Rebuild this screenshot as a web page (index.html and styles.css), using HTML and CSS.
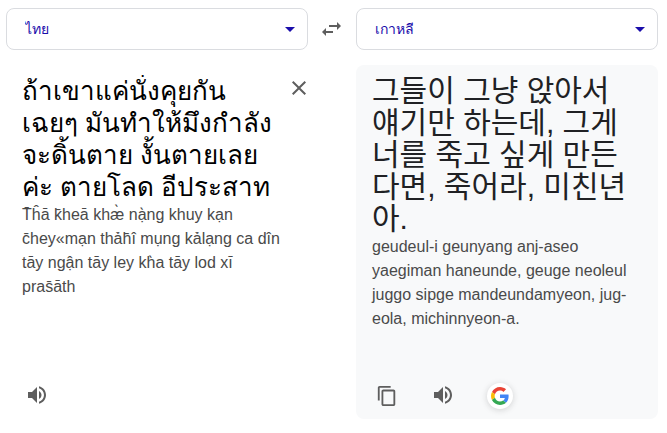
FILE: index.html
```html
<!DOCTYPE html>
<html lang="th">
<head>
<meta charset="utf-8">
<meta name="viewport" content="width=device-width, initial-scale=1">
<title>แปลภาษา</title>
<link rel="stylesheet" href="styles.css">
</head>
<body>
<main class="translator">
  <div class="picker">
    <select class="picker-select" aria-label="ภาษาต้นฉบับ"><option>ไทย</option></select>
    <svg class="icon picker-arrow" viewBox="0 0 24 24" aria-hidden="true"><path d="M7 10l5 5 5-5z"/></svg>
  </div>
  <button class="icon-button swap" type="button" aria-label="สลับภาษา">
    <svg class="icon" viewBox="0 0 24 24"><path d="M6 11L2 15l4 4v-3h7v-2H6v-3zM21 9l-4-4v3h-8v2h8v3l4-4z"/></svg>
  </button>
  <div class="picker">
    <select class="picker-select" aria-label="ภาษาปลายทาง"><option>เกาหลี</option></select>
    <svg class="icon picker-arrow" viewBox="0 0 24 24" aria-hidden="true"><path d="M7 10l5 5 5-5z"/></svg>
  </div>

  <section class="panel source">
    <div class="source-row">
      <textarea class="phrase source-input" rows="4" spellcheck="false" aria-label="ข้อความต้นฉบับ">ถ้าเขาแค่นั่งคุยกัน
เฉยๆ มันทำให้มึงกำลัง
จะดิ้นตาย งั้นตายเลย
ค่ะ ตายโลด อีประสาท</textarea>
      <button class="icon-button clear" type="button" aria-label="ล้าง">
        <svg class="icon" viewBox="0 0 24 24"><path d="M19 6.41L17.59 5 12 10.59 6.41 5 5 6.41 10.59 12 5 17.59 6.41 19 12 13.41 17.59 19 19 17.59 13.41 12z"/></svg>
      </button>
    </div>
    <p class="romanized">T̄ĥā k̄heā khæ̀ nạ̀ng khuy kạn<br>c̄hey«mạn thảh̄î mụng kảlạng ca dîn<br>tāy ngận tāy ley kh̀a tāy lod xī<br>pras̄āth</p>
    <div class="actions">
      <button class="icon-button" type="button" aria-label="ฟัง">
        <svg class="icon" viewBox="0 0 24 24"><path d="M3 9v6h4l5 5V4L7 9H3zm13.500 3c0-1.770-1.020-3.290-2.500-4.030v8.050c1.480-.73 2.500-2.250 2.500-4.020zM14 3.230v2.060c2.890.86 5 3.540 5 6.710s-2.110 5.850-5 6.710v2.060c4.010-.91 7-4.490 7-8.770s-2.990-7.860-7-8.770z"/></svg>
      </button>
    </div>
  </section>

  <section class="panel target">
    <p class="phrase target-phrase" lang="ko">그들이 그냥 앉아서<br>얘기만 하는데, 그게<br>너를 죽고 싶게 만든<br>다면, 죽어라, 미친년<br>아.</p>
    <p class="romanized">geudeul-i geunyang anj-aseo<br>yaegiman haneunde, geuge neoleul<br>juggo sipge mandeundamyeon, jug-<br>eola, michinnyeon-a.</p>
    <div class="actions">
      <button class="icon-button copy" type="button" aria-label="คัดลอก">
        <svg class="icon" viewBox="0 0 24 24"><path d="M16 1H4c-1.100 0-2 .9-2 2v14h2V3h12V1zm3 4H8c-1.100 0-2 .9-2 2v14c0 1.100.9 2 2 2h11c1.100 0 2-.9 2-2V7c0-1.100-.9-2-2-2zm0 16H8V7h11v14z"/></svg>
      </button>
      <button class="icon-button" type="button" aria-label="ฟัง">
        <svg class="icon" viewBox="0 0 24 24"><path d="M3 9v6h4l5 5V4L7 9H3zm13.500 3c0-1.770-1.020-3.290-2.500-4.030v8.050c1.480-.73 2.500-2.250 2.500-4.020zM14 3.230v2.060c2.890.86 5 3.540 5 6.710s-2.110 5.850-5 6.710v2.060c4.010-.91 7-4.490 7-8.770s-2.990-7.860-7-8.770z"/></svg>
      </button>
      <button class="search" type="button" aria-label="Google">
        <svg class="search-logo" viewBox="0 0 48 48">
          <path fill="#ea4335" d="M24 9.500c3.540 0 6.710 1.220 9.210 3.600l6.850-6.850C35.900 2.380 30.470 0 24 0 14.620 0 6.510 5.380 2.560 13.220l7.980 6.190C12.430 13.720 17.740 9.500 24 9.500z"/>
          <path fill="#4285f4" d="M46.980 24.550c0-1.570-.15-3.090-.38-4.550H24v9.020h12.940c-.58 2.960-2.260 5.480-4.780 7.180l7.730 6c4.510-4.180 7.090-10.360 7.090-17.650z"/>
          <path fill="#fbbc05" d="M10.530 28.590c-.48-1.450-.76-2.990-.76-4.590s.27-3.140.76-4.590l-7.980-6.190C.92 16.460 0 20.120 0 24s.92 7.540 2.560 10.780l7.970-6.190z"/>
          <path fill="#34a853" d="M24 48c6.480 0 11.930-2.130 15.890-5.810l-7.730-6c-2.150 1.450-4.920 2.300-8.160 2.300-6.260 0-11.570-4.220-13.470-9.910l-7.980 6.190C6.510 42.620 14.620 48 24 48z"/>
        </svg>
      </button>
    </div>
  </section>
</main>
</body>
</html>
```
FILE: styles.css
```css
* {
  box-sizing: border-box;
}

body {
  margin: 0;
  padding: 8px 9px 8px 6px;
  background: #fff;
  color: #202124;
  font-family: "Liberation Sans", "Noto Sans CJK KR", sans-serif;
}

p {
  margin: 0;
}

.translator {
  display: grid;
  grid-template-columns: minmax(0, 1fr) 48px minmax(0, 1fr);
  row-gap: 15px;
}

.icon {
  display: block;
  width: 24px;
  height: 24px;
  fill: currentColor;
}

.icon-button {
  display: block;
  flex: none;
  padding: 0;
  border: 0;
  background: none;
  color: #5e5e5e;
}

.picker {
  display: grid;
  align-items: center;
  color: #1a0dab;
}

.picker-select,
.picker-arrow {
  grid-area: 1 / 1;
}

.picker-select {
  appearance: none;
  width: 100%;
  height: 42px;
  padding: 0 40px 0 18px;
  border: 1px solid #dadce0;
  border-radius: 8px;
  background: #fff;
  color: inherit;
  font: 14px "Liberation Sans", sans-serif;
}

.picker-arrow {
  justify-self: end;
  margin-right: 6px;
  pointer-events: none;
}

.swap {
  place-self: center;
}

.panel {
  display: flex;
  flex-direction: column;
  min-height: 354px;
  padding: 10px 16px;
  border-radius: 8px;
}

.source {
  grid-column: 1;
  padding-right: 8px;
}

.target {
  grid-column: 3;
  background: #f8f9fa;
}

.phrase {
  font-size: 26px;
  line-height: 32px;
}

.target-phrase {
  font-size: 30px;
}

.source-row {
  display: flex;
}

.source-input {
  display: block;
  flex: 1;
  min-width: 0;
  height: 128px;
  padding: 0;
  border: 0;
  background: none;
  color: #000;
  font-family: "Liberation Sans", sans-serif;
  resize: none;
  overflow: hidden;
  white-space: pre;
}

.clear {
  align-self: flex-start;
  margin-top: 1px;
  margin-right: -11px;
}

.romanized {
  color: #4a4a4a;
  font-size: 16px;
  line-height: 24px;
  white-space: nowrap;
}

.actions {
  display: flex;
  align-items: flex-start;
  gap: 32px;
  height: 26px;
  margin-top: auto;
  padding: 0 3px;
}

.copy {
  align-self: center;
  padding: 1px;
}

.copy .icon {
  width: 22px;
  height: 22px;
}

.search {
  display: grid;
  place-items: center;
  width: 26px;
  height: 26px;
  padding: 0;
  border: 0;
  border-radius: 50%;
  background: #fff;
  box-shadow: 0 1px 6px rgba(32, 33, 36, 0.18);
}

.search-logo {
  width: 18px;
  height: 18px;
}
```
